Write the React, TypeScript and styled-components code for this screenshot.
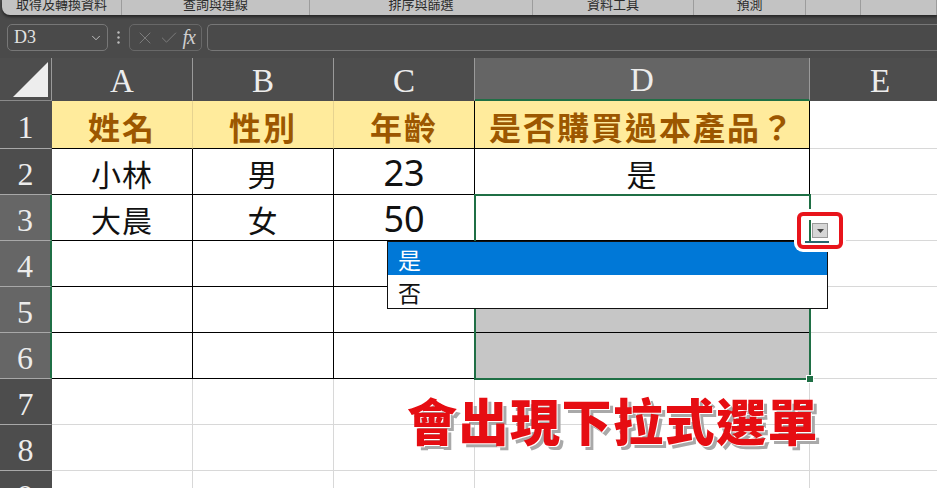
import styled, { createGlobalStyle } from "styled-components";
import { ChevronDown, X, Check } from "lucide-react";

const GlobalStyle = createGlobalStyle`
  html, body {
    margin: 0;
    height: 100%;
    overflow: hidden;
    background: #4a4a4a;
  }
  #root {
    height: 100%;
  }
`;

const CJK = `"Noto Sans", "Noto Sans CJK TC", sans-serif`;
const GREEN = "#1f6f45";

/* ---------- ribbon strip ---------- */

const Ribbon = styled.div`
  display: flex;
  height: 15px;
  margin-left: 2px;
  background: #c3c3c3;
  border-bottom-left-radius: 8px;
  box-shadow: 0 2px 3px rgba(0, 0, 0, 0.5);
  overflow: hidden;
`;

const RibbonGroup = styled.div<{ $w?: number }>`
  flex: ${(p) => (p.$w ? `0 0 ${p.$w}px` : "1")};
  border-right: 1px solid #9c9c9c;
  box-sizing: border-box;
  text-align: center;
  font-family: ${CJK};
  font-size: 13px;
  line-height: 13px;
  color: #2b2b2b;
  margin-top: -2px;
`;

/* ---------- formula bar ---------- */

const FormulaBar = styled.div`
  display: flex;
  align-items: flex-start;
  height: 43px;
  padding: 9px 0 0 7px;
  box-sizing: border-box;
`;

const NameBox = styled.div`
  width: 101px;
  height: 27px;
  box-sizing: border-box;
  border: 1px solid #777;
  border-radius: 5px;
  display: flex;
  align-items: center;
  justify-content: space-between;
  padding: 0 4px 0 6px;
  font-family: "Liberation Serif", serif;
  font-size: 18px;
  color: #e2e2e2;
`;

const Grip = styled.div`
  width: 21px;
  height: 27px;
  display: flex;
  align-items: center;
  justify-content: center;
`;

const FxBox = styled.div`
  width: 73px;
  height: 27px;
  box-sizing: border-box;
  border: 1px solid #686868;
  border-radius: 5px;
  display: flex;
  align-items: center;
  justify-content: space-between;
  padding: 0 4px 0 5px;
`;

const FxLabel = styled.span`
  font-family: "Liberation Serif", serif;
  font-style: italic;
  font-size: 20px;
  color: #cfcfcf;
  letter-spacing: -1px;
  padding-right: 2px;
`;

const FormulaInput = styled.div`
  flex: 1;
  height: 27px;
  margin-left: 5px;
  box-sizing: border-box;
  border: 1px solid #777;
  border-right: none;
  border-radius: 5px 0 0 5px;
`;

/* ---------- sheet grid ---------- */

const SheetWrap = styled.div`
  position: relative;
  overflow: hidden;
  height: 430px;
`;

const Sheet = styled.div`
  display: grid;
  grid-template-columns: 52px 141px 141px 141px 335px 141px;
  grid-template-rows: 43px 48px repeat(8, 46px);
  background: #fff;
  width: 951px;
`;

const Corner = styled.div`
  background: #4d4d4d;
  border-right: 1px solid #9a9a9a;
  border-bottom: 1px solid #8a8a8a;
  display: flex;
  align-items: flex-end;
  justify-content: flex-end;
  padding: 0 3px 3px 0;
`;

const ColHead = styled.div<{ $active?: boolean }>`
  background: ${(p) => (p.$active ? "#656565" : "#4d4d4d")};
  border-right: 1px solid #9a9a9a;
  border-bottom: ${(p) => (p.$active ? `2px solid ${GREEN}` : "1px solid #4d4d4d")};
  box-sizing: border-box;
  display: flex;
  align-items: center;
  justify-content: center;
  padding-top: 4px;
  font-family: "Liberation Serif", serif;
  font-size: 33px;
  color: #ececec;
`;

const RowHead = styled.div<{ $active?: boolean }>`
  background: ${(p) => (p.$active ? "#666" : "#4d4d4d")};
  border-bottom: 1px solid #a8a8a8;
  border-right: ${(p) => (p.$active ? `2px solid ${GREEN}` : "1px solid #4d4d4d")};
  box-sizing: border-box;
  display: flex;
  align-items: center;
  justify-content: center;
  padding-top: 6px;
  font-family: "Liberation Serif", serif;
  font-size: 32px;
  color: #ececec;
`;

type CellKind = "title" | "table" | "plain";

const Cell = styled.div<{
  $kind: CellKind;
  $shade?: boolean;
  $softRight?: boolean;
  $active?: boolean;
}>`
  position: ${(p) => (p.$active ? "relative" : "static")};
  z-index: ${(p) => (p.$active ? 3 : "auto")};
  box-sizing: border-box;
  display: flex;
  align-items: center;
  justify-content: center;
  padding-top: 2px;
  font-family: ${CJK};
  background: ${(p) =>
    p.$kind === "title" ? "#ffeb9c" : p.$shade ? "#c6c6c6" : "#fff"};
  color: ${(p) => (p.$kind === "title" ? "#9c5700" : "#111")};
  font-weight: ${(p) => (p.$kind === "title" ? 700 : 400)};
  font-size: ${(p) => (p.$kind === "title" ? "32px" : "30px")};
  letter-spacing: ${(p) => (p.$kind === "title" ? "2px" : "1px")};
  border-bottom: 1px solid ${(p) => (p.$kind === "plain" ? "#d8d8d8" : "#000")};
  border-right: 1px solid
    ${(p) =>
      p.$kind === "plain" ? "#d8d8d8" : p.$softRight ? "#e6d390" : "#000"};
`;

const Num = styled.span`
  font-size: 36px;
  letter-spacing: 0;
`;

/* ---------- overlays on the active cell ---------- */

const SelectionFrame = styled.div`
  position: absolute;
  left: -1px;
  top: -1px;
  width: 337px;
  height: 186px;
  box-sizing: border-box;
  border: 2px solid ${GREEN};
  z-index: 1;
`;

const FillHandle = styled.span`
  position: absolute;
  right: -5px;
  bottom: -5px;
  width: 6px;
  height: 6px;
  background: ${GREEN};
  border: 1px solid #fff;
`;

const ListBox = styled.div`
  position: absolute;
  left: -88px;
  top: 46px;
  width: 441px;
  box-sizing: border-box;
  border: 1px solid #111;
  background: #fff;
  z-index: 2;
`;

const ListItem = styled.div<{ $on?: boolean }>`
  height: 33px;
  display: flex;
  align-items: center;
  padding-left: 10px;
  font-family: ${CJK};
  font-size: 23px;
  font-weight: 400;
  letter-spacing: 0;
  background: ${(p) => (p.$on ? "#0078d7" : "#fff")};
  color: ${(p) => (p.$on ? "#fff" : "#111")};
`;

const Callout = styled.div`
  position: absolute;
  left: 322px;
  top: 17px;
  width: 46px;
  height: 37px;
  box-sizing: border-box;
  border: 4px solid #e8141b;
  border-radius: 6px;
  background: #fff;
  box-shadow: 0 0 0 3px #fff;
  z-index: 3;
`;

const DropButton = styled.div`
  position: absolute;
  left: 337px;
  top: 28px;
  width: 16px;
  height: 15px;
  box-sizing: border-box;
  background: #d6d6d6;
  border: 1px solid #9a9a9a;
  display: flex;
  align-items: center;
  justify-content: center;
  z-index: 4;
`;

const ButtonStem = styled.span`
  position: absolute;
  left: 334px;
  top: 25px;
  width: 2px;
  height: 22px;
  background: ${GREEN};
  z-index: 4;
`;

const ButtonBase = styled.span`
  position: absolute;
  left: 330px;
  top: 46px;
  width: 24px;
  height: 2px;
  background: #27656e;
  z-index: 4;
`;

const Banner = styled.div`
  position: absolute;
  left: 407px;
  top: 334px;
  font-family: "Noto Sans CJK TC", sans-serif;
  font-weight: 900;
  font-size: 50px;
  line-height: 54px;
  letter-spacing: 1.5px;
  color: #e60d12;
  text-shadow: 1px 1px 0 #fff, 4px 4px 0 #a9a9a9;
  white-space: nowrap;
`;

const columns = ["A", "B", "C", "D", "E"];

const tableRows: string[][] = [
  ["姓名", "性別", "年齡", "是否購買過本產品？"],
  ["小林", "男", "23", "是"],
  ["大晨", "女", "50", ""],
  ["", "", "", ""],
  ["", "", "", ""],
  ["", "", "", ""],
];

const ribbonGroups = [
  { label: "取得及轉換資料", w: 120 },
  { label: "查詢與連線", w: 188 },
  { label: "排序與篩選", w: 223 },
  { label: "資料工具", w: 161 },
  { label: "預測", w: 112 },
  { label: "", w: 55 },
  { label: "" },
];

function Corners() {
  return (
    <Corner>
      <svg width="35" height="35" viewBox="0 0 35 35">
        <polygon points="35,0 35,35 0,35" fill="#ededed" />
      </svg>
    </Corner>
  );
}

function ActiveCellExtras() {
  return (
    <>
      <SelectionFrame>
        <FillHandle />
      </SelectionFrame>
      <ListBox>
        <ListItem $on>是</ListItem>
        <ListItem>否</ListItem>
      </ListBox>
      <Callout />
      <ButtonStem />
      <DropButton>
        <svg width="7" height="4" viewBox="0 0 7 4">
          <polygon points="0,0 7,0 3.5,4" fill="#444" />
        </svg>
      </DropButton>
      <ButtonBase />
    </>
  );
}

function renderValue(v: string) {
  return /^\d+$/.test(v) ? <Num>{v}</Num> : v;
}

export default function App() {
  const rowCount = 9;
  const cells = [];

  for (let r = 1; r <= rowCount; r++) {
    const active = r >= 3 && r <= 6;
    cells.push(
      <RowHead key={`h${r}`} $active={active}>
        {r}
      </RowHead>
    );
    const data = tableRows[r - 1];
    for (let c = 0; c < 5; c++) {
      const inTable = data && c < 4;
      const kind: CellKind = !inTable ? "plain" : r === 1 ? "title" : "table";
      const isActive = r === 3 && c === 3;
      cells.push(
        <Cell
          key={`c${r}-${c}`}
          $kind={kind}
          $shade={c === 3 && r >= 4 && r <= 6}
          $softRight={r === 1 && c < 2}
          $active={isActive}
        >
          {inTable ? renderValue(data[c]) : null}
          {isActive && <ActiveCellExtras />}
        </Cell>
      );
    }
  }

  return (
    <>
      <GlobalStyle />
      <Ribbon>
        {ribbonGroups.map((g, i) => (
          <RibbonGroup key={i} $w={g.w}>
            {g.label}
          </RibbonGroup>
        ))}
      </Ribbon>
      <FormulaBar>
        <NameBox>
          D3
          <ChevronDown size={14} color="#cfcfcf" strokeWidth={1.5} />
        </NameBox>
        <Grip>
          <svg width="3" height="13" viewBox="0 0 3 13">
            <circle cx="1.5" cy="1.5" r="1.2" fill="#bdbdbd" />
            <circle cx="1.5" cy="6.5" r="1.2" fill="#bdbdbd" />
            <circle cx="1.5" cy="11.5" r="1.2" fill="#bdbdbd" />
          </svg>
        </Grip>
        <FxBox>
          <X size={20} color="#7c7c7c" strokeWidth={1.2} />
          <Check size={20} color="#7c7c7c" strokeWidth={1.2} />
          <FxLabel>fx</FxLabel>
        </FxBox>
        <FormulaInput />
      </FormulaBar>
      <SheetWrap>
        <Sheet>
          <Corners />
          {columns.map((col) => (
            <ColHead key={col} $active={col === "D"}>
              {col}
            </ColHead>
          ))}
          {cells}
        </Sheet>
        <Banner>會出現下拉式選單</Banner>
      </SheetWrap>
    </>
  );
}
